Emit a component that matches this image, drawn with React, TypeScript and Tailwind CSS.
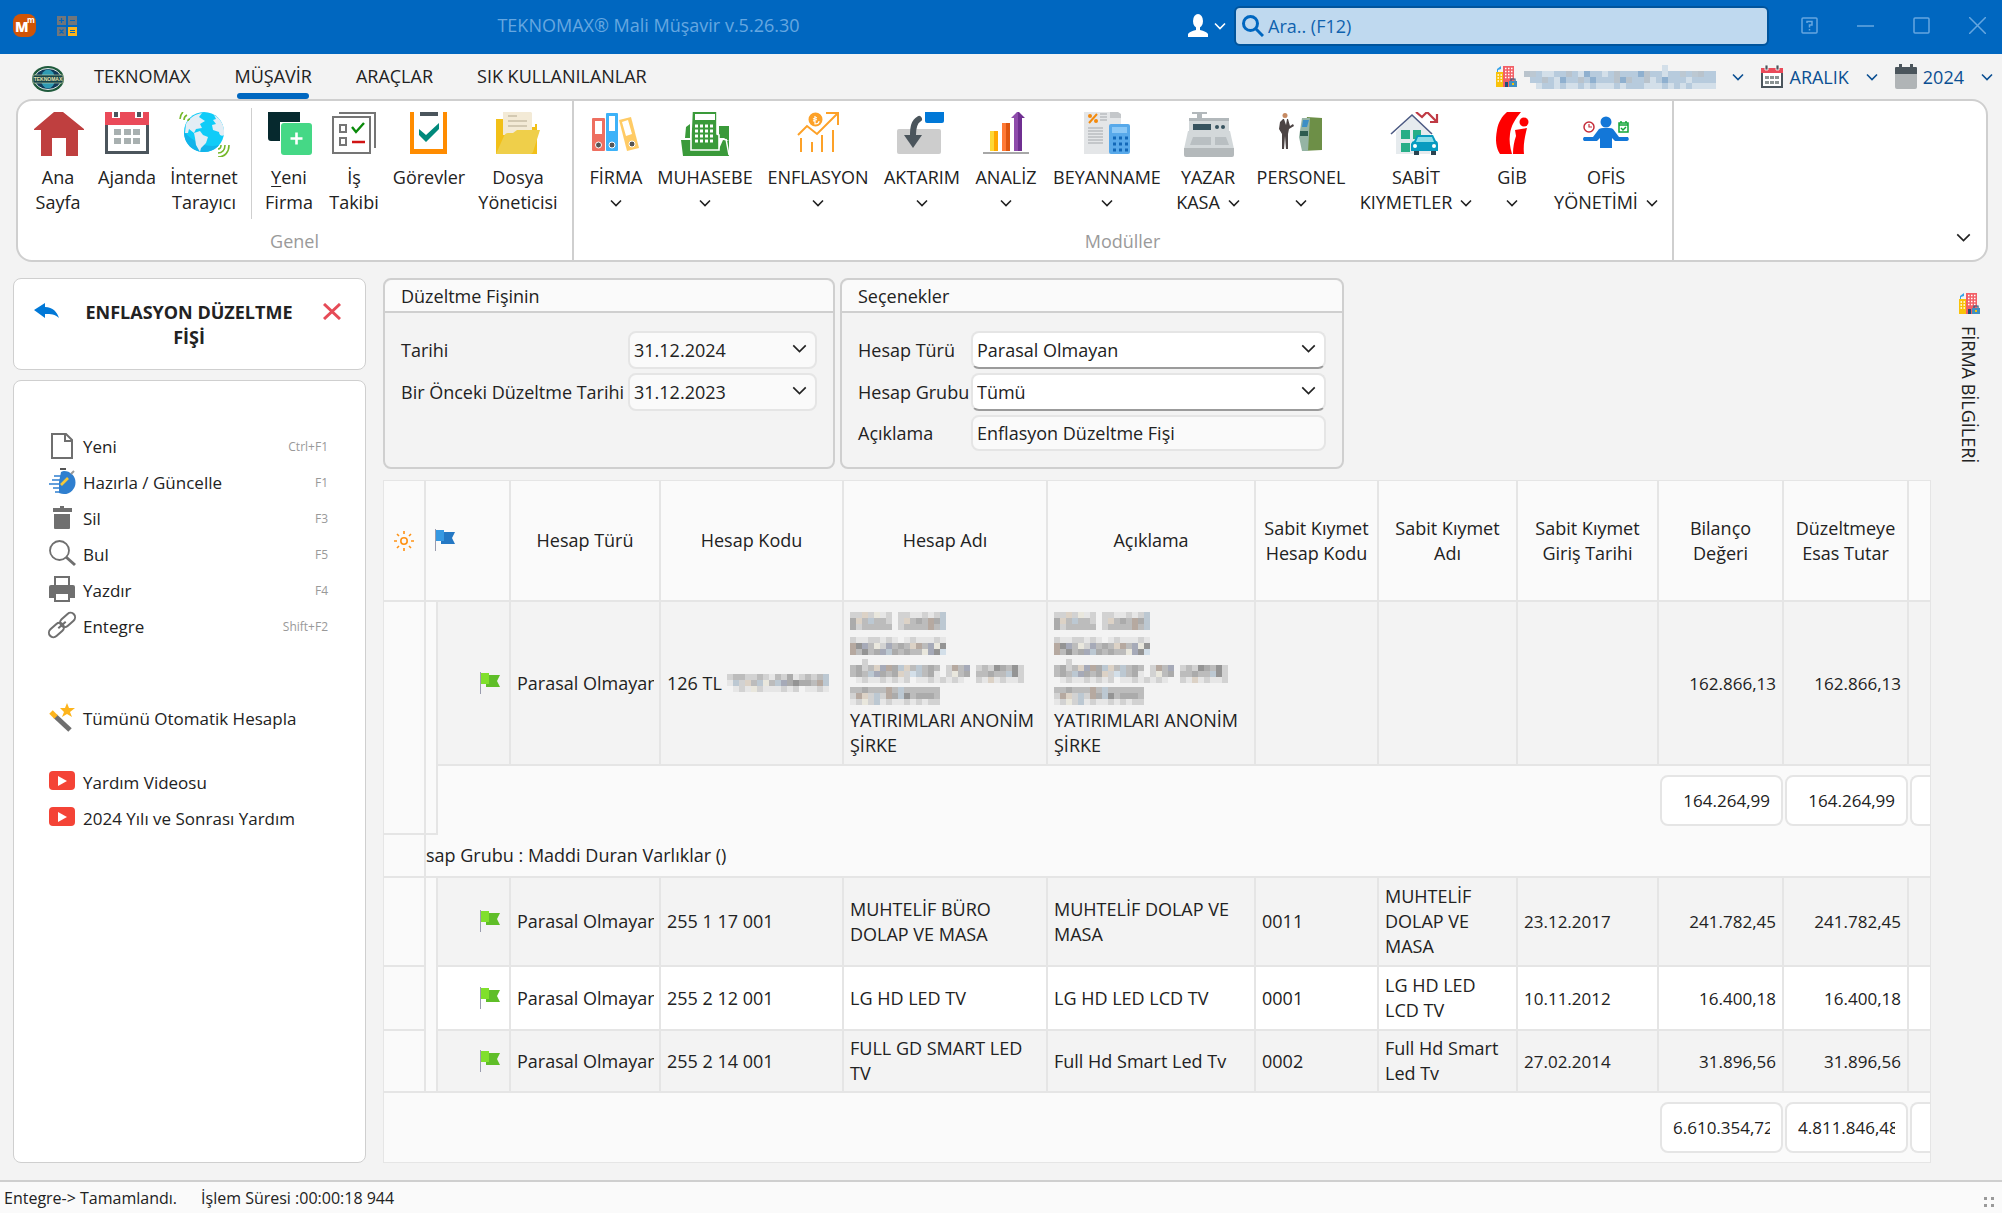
import { useState } from 'react';
import type { ReactNode } from 'react';

function Chevron({ className = '', size = 12 }: { className?: string; size?: number }) {
  return (
    <svg width={size} height={size} viewBox="0 0 12 12" fill="none" stroke="currentColor" strokeWidth={size > 12 ? 1.3 : 1.6} className={className}>
      <path d="M1 3.5 6 8.5 11 3.5" />
    </svg>
  );
}

/* ---------- ribbon icons, all on a 56x45 grid ---------- */

const icons: Record<string, ReactNode> = {
  home: (
    <path fill="#bf3f3f" d="M24 0h9l21 17v1h-6v26H36V26H22v18H11V18H4v-1z" />
  ),
  calendar: (
    <>
      <path fill="#4b555c" d="M6 0h44v42H6z" />
      <path fill="#fff" d="M9 13h38v26H9z" />
      <path fill="#ea4a59" d="M6 0h44v13H6z" />
      <path fill="#fff" d="M13 0h8v6h-8zM36 0h8v6h-8z" />
      <path fill="#4b555c" d="M15 0h4v5h-4zM38 0h4v5h-4z" />
      <path fill="#a8b0b0" d="M15 17h7v6h-7zM25 17h7v6h-7zM34 17h7v6h-7zM15 26h7v6h-7zM25 26h7v6h-7zM34 26h7v6h-7z" />
    </>
  ),
  globe: (
    <>
      <circle cx="28" cy="20" r="20" fill="#10ccf8" />
      <path fill="#12b4ea" d="M8 20c0 12 9 20 20 20 6 0 12-3 15-7-9 3-22 0-35-13z" />
      <path fill="#e3edf5" d="M10 12c4-7 10-10 16-11l-3 4 6 4-5 3 2 4-6 1-2 4-5-4-1 4-3 0z" />
      <path fill="#e3edf5" d="M18 21l6-2 3 4 5 2-2 6-5 5-1 4-4-7-1-7z" />
      <path fill="#e3edf5" d="M38 3c7 4 11 11 10 20-2 2-5 0-5-3l-6-2-1-5 4-1-3-4 3-1z" />
      <path fill="none" stroke="#76b82a" strokeWidth="1.6" d="M4 7c0-3 1-5 3-7M8 8c0-2 1-4 3-5M12 9c0-1 1-2 2-2M42 37c2 0 3-2 3-4M42 41c4 0 7-3 7-8M42 45c7 0 11-5 11-12" />
    </>
  ),
  addFirm: (
    <>
      <path fill="#06292e" d="M7 0h32v10H19v19H10a3 3 0 0 1-3-3z" />
      <rect x="20" y="11" width="31" height="32" rx="3" fill="#45d886" />
      <path stroke="#fff" strokeWidth="2.6" d="M35.500 20.500v12M29.500 26.500h12" />
    </>
  ),
  tasks: (
    <>
      <path fill="none" stroke="#757575" strokeWidth="2" d="M13 1h36v35" />
      <rect x="7" y="5" width="37" height="36" fill="#fff" stroke="#757575" strokeWidth="2" />
      <path fill="none" stroke="#757575" strokeWidth="2" d="M14 13h6v7h-6zM14 26h6v7h-6z" />
      <path fill="none" stroke="#0a8a0a" strokeWidth="2.4" d="m26 15 4 5 8-9" />
      <path stroke="#d01414" strokeWidth="2.600" d="M26 30h13" />
    </>
  ),
  clipboard: (
    <>
      <path fill="#ff8c00" d="M9 0h37v42H9z" />
      <path fill="#fff" d="M13 0h29v37H13z" />
      <path fill="#4b555c" d="M19 0h18v4H19z" />
      <path fill="#00897b" d="m18 17 7 6 13-12v6L25 30l-7-7z" />
    </>
  ),
  folder: (
    <>
      <path fill="#f2c018" d="M6 7h7v8h32v-3h2v30H6z" />
      <path fill="#f3ead6" d="M13 0h28l1 1v22H13z" />
      <path stroke="#c9bfa6" strokeWidth="1.400" d="M18 4h9M18 9h19M18 14h19" />
      <path fill="#efcf4a" d="M6 42 14 24c1-2 2-3 4-3h5l4-3h23l-7 22q-1 2-3 2z" />
    </>
  ),
  binders: (
    <>
      <rect x="4" y="6" width="13" height="33" rx="1" fill="#ee6f60" />
      <rect x="18" y="1" width="12" height="38" rx="1" fill="#3db2f8" />
      <path fill="#ffcb65" d="m31 8 12-3 8 31-12 3z" />
      <path fill="#fff" d="M7 9h7v13H7zM21 4h6v15h-6zM34 10l6-2 4 14-6 2z" />
      <circle cx="10.500" cy="33" r="3" fill="#555" stroke="#fff" />
      <circle cx="24" cy="33" r="3" fill="#555" stroke="#fff" />
      <circle cx="44" cy="32" r="3" fill="#555" stroke="#fff" />
    </>
  ),
  accounting: (
    <>
      <path fill="#3a9a3a" d="M4 28h10l3 9h25l4-9V28l6 1v15H6zM9 15l4-3v14H8zM42 14h10v15l-5-3h-5z" />
      <path fill="#3a9a3a" stroke="#fff" strokeWidth="1.600" d="M15 -1h25v23l2 1v15H14V22z" />
      <path fill="#fff" d="M18 2h20v6H18z" />
      <path stroke="#fff" strokeWidth="3" strokeDasharray="3 2" d="M18 14h20M18 19h20M18 24h20M18 29h20" />
      <path stroke="#fff" strokeWidth="1.400" d="m49 27 3 16" />
    </>
  ),
  inflation: (
    <g fill="none" stroke="#fda128" strokeWidth="2">
      <path d="m8 23 9-9 10 8L47 2M36 1h12v12M11 26v14M22 30v10M32 23v17M43 18v22" />
      <circle cx="25.500" cy="7.500" r="6" fill="#fda128" />
      <path stroke="#fff" strokeWidth="1.200" d="M25 4v8c2 0 4-1 4-3M23 7l4-1.500M23 9l4-1.500" />
    </g>
  ),
  transfer: (
    <>
      <rect x="3" y="17" width="44" height="25" rx="2" fill="#cdcdcd" />
      <path fill="#0078d7" d="M31 0h19v9q0 2-2 2H33q-2 0-2-2z" />
      <path fill="none" stroke="#4b555c" strokeWidth="6" strokeLinecap="round" d="M25 7c-5 3-6 8-6 16" />
      <path fill="#4b555c" d="M10 23h18l-9 13z" />
    </>
  ),
  analysis: (
    <>
      <path fill="#fdd835" d="M12 19h4v20h-4z" />
      <path fill="#ffa800" d="M16 19h4v20h-4z" />
      <path fill="#ff7a36" d="M24 11h4v28h-4z" />
      <path fill="#dd5510" d="M28 11h4v28h-4z" />
      <path fill="#8e4cab" d="M33 6 39 0h1v39h-4V6z" />
      <path fill="#6f2f91" d="M40 0h1l6 6h-3v33h-4z" />
      <path stroke="#8a8a8a" strokeWidth="1.600" d="M5 41h46" />
    </>
  ),
  declaration: (
    <>
      <path fill="#e4e6e8" d="M5 0h26l11 6v36H5z" />
      <path fill="#c4c7ca" d="M31 0v6h11V2l-3-2z" />
      <path stroke="#f48a0c" strokeWidth="2" d="m10 11 8-9" />
      <circle cx="11" cy="4" r="2" fill="#f48a0c" />
      <circle cx="17" cy="9" r="2" fill="#f48a0c" />
      <path stroke="#b9bdc0" strokeWidth="1.400" d="M21 2h7M21 5h7M21 8h7M9 16h15M9 19h15M9 22h15M9 25h15M9 28h15M9 31h15" />
      <rect x="30" y="12" width="21" height="30" rx="2" fill="#58a9ea" />
      <path fill="#8cc8f6" d="M33 15h15v6H33z" />
      <path stroke="#1268b8" strokeWidth="3" strokeDasharray="3 3" d="M34 26h15M34 32h15M34 38h15" />
    </>
  ),
  register: (
    <>
      <path fill="#b2b8bb" d="M12 0h15v2h-5v4h-5V2h-5z" />
      <path fill="#d3d8da" d="M9 6h40v13H9z" />
      <path fill="#b2b8bb" d="M9 6h40v3H9z" />
      <path fill="#37535f" d="M13 12h18v6H13z" />
      <circle cx="37" cy="15" r="2" fill="#37535f" />
      <circle cx="43" cy="15" r="2" fill="#37535f" />
      <path fill="#d3d8da" d="M8 19h42l4 18H4z" />
      <path fill="#b9bfc2" d="M13 25h18v8H10zM35 25h11l3 8H35z" />
      <path fill="#b4b9bb" d="M4 36h50v7q0 2-2 2H6q-2 0-2-2z" />
    </>
  ),
  personnel: (
    <>
      <circle cx="12" cy="3.500" r="2.500" fill="#c68a62" />
      <path fill="#4c4444" d="M10 7h5l2 7 3-2 1 2-5 3-1 5v15h-2l-1-13-1 13H9V22l-3-5 1-7z" />
      <path fill="#fff" d="M11 7h3l-1 6z" />
      <path fill="#6d8f47" d="m34 5 15 1v32l-20 1V26z" />
      <path fill="#95b4a4" d="m29 6 8 0-2 33h-6l-3-14z" />
      <path fill="#3d8fc6" d="m30 8 6 0-2 7h-5z" />
      <path fill="#2d5c50" d="M27 19h8v5h-8z" />
    </>
  ),
  assets: (
    <>
      <path fill="#e6ebee" d="M8 20 24 3l18 18v21H8z" />
      <path fill="none" stroke="#4d5b84" strokeWidth="1.600" d="M3 22 24 3l20 19" />
      <path fill="#27ae87" d="M13 18h9v9h-9zM25 18h8v9h-8zM13 31h9v9h-9z" />
      <path fill="none" stroke="#bf3a44" strokeWidth="2.200" d="m28 0 6 5 5-5 10 10M42 10h7V2" />
      <path fill="#2b4350" d="M26 38h5v5h-5zM43 38h5v5h-5z" />
      <path fill="#079bc0" d="M23 32q1-3 3-3l3-6h16l3 6q2 0 2 4v6H23z" />
      <path fill="#8ddde8" d="m30 25 14 0 2 5H28z" />
      <circle cx="27" cy="34" r="2" fill="#fff" />
      <circle cx="46" cy="34" r="2" fill="#fff" />
    </>
  ),
  gib: (
    <>
      <path fill="#fe0000" d="M23 0h14c-6 7-10 14-11 22-1 7 0 13 2 20H16C12 36 11 28 13 18 14 11 18 4 23 0z" />
      <path fill="#fe0000" d="m31 18 12-2c-2 8-4 17-3 26H29c0-7 1-12 3-18z" />
      <circle cx="40" cy="10" r="4.500" fill="#fe0000" />
    </>
  ),
  office: (
    <>
      <circle cx="28" cy="10" r="5.500" fill="#1377d8" />
      <path fill="#1377d8" d="M6 25h9l6-8q2-1 4-1h6q3 0 4 1l6 8h9q2 3-1 4H37l-3-3v10H22V26l-3 3H6q-2-2 0-4z" />
      <circle cx="11" cy="15" r="5" fill="none" stroke="#c62f3c" strokeWidth="1.500" />
      <path fill="none" stroke="#c62f3c" strokeWidth="1.200" d="M11 12v3h3" />
      <path fill="none" stroke="#12a537" strokeWidth="1.500" d="M41 11h9v9h-9zM41 13h9M43 9v2M48 9v2M43 16l2 2 3-3" />
    </>
  ),
};

interface RibbonItem {
  icon: string;
  width: string;
  lines: string[];
  menu?: boolean;
  accessKey?: boolean;
}

const generalLeft: RibbonItem[] = [
  { icon: 'home', width: 'w-[68px]', lines: ['Ana', 'Sayfa'] },
  { icon: 'calendar', width: 'w-[70px]', lines: ['Ajanda'] },
  { icon: 'globe', width: 'w-[84px]', lines: ['İnternet', 'Tarayıcı'] },
];

const generalRight: RibbonItem[] = [
  { icon: 'addFirm', width: 'w-[64px]', lines: ['Yeni', 'Firma'], accessKey: true },
  { icon: 'tasks', width: 'w-[66px]', lines: ['İş', 'Takibi'] },
  { icon: 'clipboard', width: 'w-[84px]', lines: ['Görevler'] },
  { icon: 'folder', width: 'w-[94px]', lines: ['Dosya', 'Yöneticisi'] },
];

const modules: RibbonItem[] = [
  { icon: 'binders', width: 'w-[70px]', lines: ['FİRMA'], menu: true },
  { icon: 'accounting', width: 'w-[108px]', lines: ['MUHASEBE'], menu: true },
  { icon: 'inflation', width: 'w-[118px]', lines: ['ENFLASYON'], menu: true },
  { icon: 'transfer', width: 'w-[90px]', lines: ['AKTARIM'], menu: true },
  { icon: 'analysis', width: 'w-[78px]', lines: ['ANALİZ'], menu: true },
  { icon: 'declaration', width: 'w-[124px]', lines: ['BEYANNAME'], menu: true },
  { icon: 'register', width: 'w-[78px]', lines: ['YAZAR', 'KASA'], menu: true },
  { icon: 'personnel', width: 'w-[108px]', lines: ['PERSONEL'], menu: true },
  { icon: 'assets', width: 'w-[122px]', lines: ['SABİT', 'KIYMETLER'], menu: true },
  { icon: 'gib', width: 'w-[70px]', lines: ['GİB'], menu: true },
  { icon: 'office', width: 'w-[118px]', lines: ['OFİS', 'YÖNETİMİ'], menu: true },
];

function RibbonButton({ item }: { item: RibbonItem }) {
  const [first, second] = item.lines;
  return (
    <button type="button" className={`flex shrink-0 flex-col items-center whitespace-nowrap ${item.width}`}>
      <svg width="56" height="45" viewBox="0 0 56 45">{icons[item.icon]}</svg>
      <span className="mt-2 leading-[25px]">
        {item.accessKey ? <><u className="underline-offset-2">{first[0]}</u>{first.slice(1)}</> : first}
      </span>
      <span className="flex h-[25px] items-center gap-2 leading-[25px]">
        {second}
        {item.menu && <Chevron />}
      </span>
    </button>
  );
}

function RibbonGroup({ title, children }: { title: string; children: ReactNode }) {
  return (
    <div className="flex flex-col border-r-2 border-[#cfcfcf] pt-[11px] pr-[7px] pl-[6px]">
      <div className="flex">{children}</div>
      <div className="mt-[14px] text-center leading-[25px] text-[#9a9a9a]">{title}</div>
    </div>
  );
}

/* ---------- small shared drawings ---------- */

function BuildingIcon() {
  return (
    <svg width="21" height="21" viewBox="0 0 21 21">
      <path fill="#f25f66" d="M7 0h11v21H7z" />
      <path stroke="#fff" strokeWidth="1.400" strokeDasharray="1.500 1.500" d="M9 2.500h8M9 5.500h8M9 8.500h8M9 11.500h8" />
      <path fill="#f9c20a" d="M0 6h7v15H0z" />
      <path stroke="#fff" strokeWidth="1.400" strokeDasharray="1.500 1.500" d="M1.500 9h5M1.500 12h5M1.500 15h5" />
      <path fill="#36a3e8" d="M1 3l4-3v3l-3 1v2H1z" />
      <path fill="#1f4e79" d="M9 16h3v5H9z" />
      <path fill="#3f8fc0" d="M13 15h8v6h-8z" />
      <path fill="none" stroke="#2a5d84" strokeWidth="1.200" d="M15 15v-2h4v2" />
      <path fill="#f9c20a" d="M16 17h2v2h-2z" />
    </svg>
  );
}

function Flag({ light, dark }: { light: string; dark: string }) {
  return (
    <svg width="22" height="23" viewBox="0 0 22 23">
      <path fill="#9a9cae" d="M1 0h1v22H1z" />
      <path fill={dark} d="M7 3h14l-3 6 3 6H7z" />
      <path fill={light} d="M2 1h8v11H2z" />
    </svg>
  );
}

const shades: Record<string, string> = {
  '1': '#e6e6e6',
  '2': '#d2d2d2',
  '3': '#bcbcbc',
  '4': '#ababab',
  '5': '#949494',
  b: '#bcc8d2',
  t: '#dcd2c6',
  s: '#a6aab8',
  k: '#b6a9a0',
  w: '#e9e7dd',
  x: '#d3dfe9',
  y: '#b7cbdd',
  z: '#8fb0cf',
  q: '#b9c3cc',
};

// Masked names are shown as rows of coarse cells
function Masked({ rows }: { rows: string[] }) {
  const cols = Math.max(...rows.map((r) => r.length));
  return (
    <svg width={cols * 6} height={rows.length * 6} shapeRendering="crispEdges" className="shrink-0">
      {rows.flatMap((row, y) =>
        row.split('').map((c, x) => (shades[c] ? <rect key={`${x}-${y}`} x={x * 6} y={y * 6} width="6" height="6" fill={shades[c]} /> : null))
      )}
    </svg>
  );
}

const maskedFirm = [
  '00000000000000000000000x00000000',
  'qbyxxyyqyxzyyxyqyyyzqyyxyybybqyy',
  '0yyqyxzyyqyzyyyqzqyyqxyzyyyxyyyy',
  '00xyyxyxxyxyxxxyxyyyxxxyxyxyxxxx',
];

const maskedName = [
  ['22t2w1202211212b', '4t3b33202t343k4b', '4233333023333k3b'],
  ['2112212101211121', 'k5s3w2s343tk3sw5', 'k3534sb43433ws5x'],
  ['00200000000000000000000000000', '3423tsk4bt3b34302k3s023254352', '343bs434t2xb34102w34033433b52', '01211212120112121210021t12112'],
  ['334333k3b333333', '2kt2b2k4b534443', '12w2b1211212122'],
];

function MaskedName() {
  return (
    <>
      {maskedName.map((rows, i) => (
        <span key={i} className="flex h-[25px] items-center">
          <Masked rows={rows} />
        </span>
      ))}
    </>
  );
}

/* ---------- title bar and tabs ---------- */

function TitleBar() {
  return (
    <header className="flex h-[54px] shrink-0 items-center bg-[#0067c0] pb-[3px] text-[#66a7e0]">
      <svg width="24" height="25" viewBox="0 0 24 25" className="ml-[12px]">
        <rect x="1" y="1" width="23" height="23" rx="8" fill="#d15405" />
        <text x="3" y="19" fontSize="14" fontWeight="800" fontFamily="Open Sans, sans-serif" fill="#fff">M</text>
        <text x="15" y="10" fontSize="8" fontWeight="700" fontFamily="Open Sans, sans-serif" fill="#fff">m</text>
      </svg>
      <svg width="20" height="20" viewBox="0 0 20 20" className="ml-[21px]">
        <path fill="#70767c" d="M0 0h9v9H0zM11 0h9v9h-9zM0 11h9v9H0z" />
        <path fill="#fdb41c" d="M11 11h9v9h-9z" />
        <path stroke="#0067c0" strokeWidth="1.200" d="M2 4.500h5M4.500 2v5M13 4.500h5M2.500 13.500l4 4M6.500 13.500l-4 4M13 14.500h5M13 16.500h5" />
      </svg>
      <h1 className="w-[1111px] pl-8 text-center leading-[25px]">TEKNOMAX® Mali Müşavir v.5.26.30</h1>
      <button type="button" aria-label="Kullanıcı" className="flex items-center gap-[6px] text-white">
        <svg width="20" height="24" viewBox="0 0 20 24" fill="currentColor">
          <ellipse cx="10" cy="7" rx="5" ry="7" />
          <path d="M8 12h4v4c4 1 7 2 8 4v3H0v-3c1-2 4-3 8-4z" />
        </svg>
        <Chevron />
      </button>
      <label className="ml-2 flex h-10 min-w-0 flex-1 items-center gap-1 rounded-md border-2 border-[#00549c] bg-[#bfd9ef] px-[6px]">
        <svg width="22" height="22" viewBox="0 0 22 22" fill="none" stroke="#0067c0" strokeWidth="3">
          <circle cx="8.500" cy="8.500" r="7" />
          <path d="m14 14 7 7" />
        </svg>
        <input aria-label="Ara" placeholder="Ara.. (F12)" className="min-w-0 flex-1 bg-transparent outline-none placeholder:text-[#0f62ae]" />
      </label>
      <div className="flex items-center gap-[39px] pr-[16px] pl-[32px]">
        <button type="button" aria-label="Yardım">
          <svg width="17" height="17" viewBox="0 0 17 17" fill="none" stroke="currentColor" strokeWidth="1.500">
            <rect x="1" y="1" width="15" height="15" rx="1" />
            <path d="M6 6V4.500h5V8H8.500v2.500M8.500 12v1.500" />
          </svg>
        </button>
        <button type="button" aria-label="Küçült">
          <svg width="17" height="17" stroke="currentColor" strokeWidth="1.500"><path d="M0 9h17" /></svg>
        </button>
        <button type="button" aria-label="Ekranı kapla">
          <svg width="17" height="17" fill="none" stroke="currentColor" strokeWidth="1.500"><rect x="1" y="1" width="15" height="15" rx="1" /></svg>
        </button>
        <button type="button" aria-label="Kapat">
          <svg width="17" height="17" stroke="currentColor" strokeWidth="1.500"><path d="m0 0 17 17M17 0 0 17" /></svg>
        </button>
      </div>
    </header>
  );
}

const tabs = ['TEKNOMAX', 'MÜŞAVİR', 'ARAÇLAR', 'SIK KULLANILANLAR'];

function TabBar({ active, onSelect }: { active: string; onSelect: (tab: string) => void }) {
  return (
    <div className="flex h-[45px] shrink-0 items-stretch">
      <svg width="32" height="26" viewBox="0 0 32 26" className="mt-[12px] ml-[32px] mr-2">
        <ellipse cx="16" cy="13" rx="16" ry="13" fill="#1f5a3c" />
        <ellipse cx="16" cy="13" rx="13.500" ry="10.500" fill="#123b5a" stroke="#dfe9e4" />
        <ellipse cx="16" cy="13" rx="7" ry="9.500" fill="#2f9bb4" />
        <path fill="#14434a" stroke="#cfd8a8" strokeWidth=".6" d="M1 9h30v8H1z" />
        <text x="16" y="15" textAnchor="middle" fontSize="5" fontWeight="700" fontFamily="Liberation Sans, sans-serif" fill="#e8e4b0">TEKNOMAX</text>
      </svg>
      <nav className="flex">
        {tabs.map((tab) => (
          <button key={tab} type="button" onClick={() => onSelect(tab)} className="flex flex-col items-center px-[22px] pt-[10px] leading-[25px]">
            {tab}
            {tab === active && <span className="mt-1 h-[6px] w-[72px] rounded-full bg-[#0067c0]" />}
          </button>
        ))}
      </nav>
      <div className="ml-auto flex items-center pr-[9px] text-[#0b4f92]">
        <button type="button" aria-label="Firma seç" className="flex items-center">
          <BuildingIcon />
          <span className="mr-4 ml-[7px]"><Masked rows={maskedFirm} /></span>
          <Chevron />
        </button>
        <button type="button" className="ml-4 flex items-center">
          <svg width="24" height="24" viewBox="0 0 24 24" className="mr-[6px]">
            <path fill="#4b555c" d="M1 3h22v20H1z" />
            <path fill="#fff" d="M3 8h18v13H3z" />
            <path fill="#ea4a59" d="M1 3h22v5H1z" />
            <path fill="#4b555c" stroke="#fff" strokeWidth=".8" d="M5 0h3v5H5zM16 0h3v5h-3z" />
            <path fill="#8b9393" d="M5 11h4v3H5zM10 11h4v3h-4zM15 11h4v3h-4zM5 16h4v3H5zM10 16h4v3h-4zM15 16h4v3h-4z" />
          </svg>
          ARALIK
          <Chevron className="ml-[17px]" />
        </button>
        <button type="button" className="ml-4 flex items-center">
          <svg width="24" height="25" viewBox="0 0 24 25" className="mr-[5px]">
            <path fill="#b0b4b6" d="M1 9h22v14q0 2-2 2H3q-2 0-2-2z" />
            <path fill="#4b555c" d="M1 4q0-1 1-1h3V0h3v3h8V0h3v3h3q1 0 1 1v6H1z" />
          </svg>
          2024
          <Chevron className="ml-[17px]" />
        </button>
      </div>
    </div>
  );
}

function Ribbon() {
  return (
    <section className="mr-[14px] ml-4 flex h-[163px] shrink-0 overflow-hidden rounded-2xl border-2 border-[#cfcfcf] bg-white">
      <RibbonGroup title="Genel">
        {generalLeft.map((item) => <RibbonButton key={item.icon} item={item} />)}
        <span className="mx-[5px] -my-[4px] h-[111px] w-px bg-[#cfcfcf]" />
        {generalRight.map((item) => <RibbonButton key={item.icon} item={item} />)}
      </RibbonGroup>
      <RibbonGroup title="Modüller">
        <span className="w-px" />
        {modules.map((item) => <RibbonButton key={item.icon} item={item} />)}
      </RibbonGroup>
      <button type="button" aria-label="Şeridi daralt" className="mt-auto mr-[15px] mb-[15px] ml-auto">
        <Chevron size={15} />
      </button>
    </section>
  );
}

/* ---------- left menu ---------- */

const gray = '#6f6f6f';

const menuIcons: Record<string, ReactNode> = {
  new: <path fill="none" stroke={gray} strokeWidth="2" d="M3 0h14l6 6v18H3zM16 0v7h7" />,
  refresh: (
    <>
      <path fill="#2f7fcf" d="M12 2q2-1 3-1a11.500 11.500 0 0 1 0 23q-2 0-5-1V12z" />
      <path stroke="#2f7fcf" strokeWidth="1.400" d="M5 6h8M3 10h9M0 14h11M4 18h8M6 22h6" />
      <path stroke="#555" strokeWidth="2" d="M11-1h6" />
      <path stroke="#999" strokeWidth="2" d="m22 4 3-3" />
      <path stroke="#f6c83a" strokeWidth="2.600" d="m12 15 7-7" />
    </>
  ),
  trash: <path fill={gray} d="M4 2h7V0h4v2h8v4H4zM5 8h16v14q0 1-1 1H6q-1 0-1-1z" />,
  find: (
    <g fill="none" stroke={gray}>
      <circle cx="10.500" cy="8.500" r="9.500" strokeWidth="1.800" />
      <path strokeWidth="3" d="m17 15 9 8" />
    </g>
  ),
  print: (
    <>
      <path fill={gray} d="M2 7h22q2 0 2 2v11H0V9q0-2 2-2z" />
      <path fill="#fff" stroke={gray} strokeWidth="2" d="M6-1h14v10H6zM6 15h14v8H6z" />
      <path fill={gray} d="M5 7h16v5H5z" />
    </>
  ),
  link: (
    <g fill="none" stroke={gray} strokeWidth="2" transform="rotate(-42 13 11)">
      <rect x="-3" y="6.500" width="17" height="9" rx="4.500" />
      <rect x="12" y="6.500" width="17" height="9" rx="4.500" />
      <path d="M8 11h10" />
    </g>
  ),
  wand: (
    <>
      <path stroke="#6f6f6f" strokeWidth="5" d="m6 10 15 14" />
      <path stroke="#fdb41c" strokeWidth="5" d="m2 6 5 5" />
      <path fill="#fdb41c" d="m18-3 2 5 6 0-5 4 2 5-5-3-5 3 2-5-4-4h5z" />
    </>
  ),
  video: (
    <>
      <rect x="0" y="1" width="26" height="19" rx="4" fill="#f44336" />
      <path fill="#fff" d="m9 6 9 5-9 5z" />
    </>
  ),
};

function MenuRow({ icon, label, shortcut }: { icon: string; label: string; shortcut?: string }) {
  return (
    <button type="button" className="flex h-9 w-full items-center text-left text-[17px]">
      <svg width="26" height="27" viewBox="0 0 26 27" overflow="visible">{menuIcons[icon]}</svg>
      <span className="ml-2">{label}</span>
      {shortcut && <span className="ml-auto text-xs text-[#999]">{shortcut}</span>}
    </button>
  );
}

function Sidebar() {
  return (
    <aside className="flex w-[353px] shrink-0 flex-col gap-[10px]">
      <div className="flex h-[92px] items-start rounded-lg border border-[#cfcfcf] bg-white pt-[21px] pr-6 pl-[20px]">
        <button type="button" aria-label="Geri" className="mt-[3px]">
          <svg width="25" height="16" viewBox="0 0 25 16"><path fill="#0078d7" d="M0 7 11 0v4c8 0 12 5 14 11-4-4-8-4-14-4v4z" /></svg>
        </button>
        <h2 className="flex-1 pr-7 pl-6 text-center leading-[25px] font-bold">ENFLASYON DÜZELTME FİŞİ</h2>
        <button type="button" aria-label="Kapat" className="mt-[3px]">
          <svg width="18" height="17" viewBox="0 0 18 17" stroke="#e64b57" strokeWidth="3"><path d="m1 1 16 15M17 1 1 16" /></svg>
        </button>
      </div>
      <nav className="flex-1 rounded-lg border border-[#cfcfcf] bg-white pt-12 pr-[37px] pl-[35px]">
        <MenuRow icon="new" label="Yeni" shortcut="Ctrl+F1" />
        <MenuRow icon="refresh" label="Hazırla / Güncelle" shortcut="F1" />
        <MenuRow icon="trash" label="Sil" shortcut="F3" />
        <MenuRow icon="find" label="Bul" shortcut="F5" />
        <MenuRow icon="print" label="Yazdır" shortcut="F4" />
        <MenuRow icon="link" label="Entegre" shortcut="Shift+F2" />
        <div className="mt-14 mb-7">
          <MenuRow icon="wand" label="Tümünü Otomatik Hesapla" />
        </div>
        <MenuRow icon="video" label="Yardım Videosu" />
        <MenuRow icon="video" label="2024 Yılı ve Sonrası Yardım" />
      </nav>
    </aside>
  );
}

/* ---------- forms ---------- */

function Panel({ title, width, children }: { title: string; width: string; children: ReactNode }) {
  return (
    <fieldset className={`h-[191px] overflow-hidden rounded-lg border-2 border-[#cfcfcf] ${width}`}>
      <div className="h-[33px] border-b-2 border-[#cfcfcf] bg-[#fafafa] px-4 leading-[32px]">{title}</div>
      <div className="flex flex-col gap-1 px-4 pt-[18px]">{children}</div>
    </fieldset>
  );
}

function SelectField({ id, label, options, size, muted }: { id: string; label: string; options: string[]; size: string; muted?: boolean }) {
  return (
    <div className="flex h-[38px] items-center justify-between whitespace-nowrap">
      <label htmlFor={id}>{label}</label>
      <div className={`relative h-[38px] shrink-0 ${size}`}>
        <select
          id={id}
          className={`h-full w-full appearance-none rounded-lg border-2 border-[#e5e5e5] px-1 outline-none ${muted ? 'bg-[#fafafa]' : 'border-b-[#9b9b9b] bg-white'}`}
        >
          {options.map((o) => <option key={o}>{o}</option>)}
        </select>
        <Chevron size={15} className="pointer-events-none absolute top-[10px] right-[10px]" />
      </div>
    </div>
  );
}

/* ---------- table ---------- */

interface Entry {
  type: string;
  code: ReactNode;
  name: ReactNode;
  description: ReactNode;
  assetCode: string;
  assetName: string;
  entryDate: string;
  balance: string;
  base: string;
  height: string;
  background: string;
}

const maskedEntry: Entry = {
  type: 'Parasal Olmayan',
  code: (
    <span className="flex items-center gap-[5px] whitespace-nowrap">
      126 TL <Masked rows={['2332232132412323b', '1b2t3bw3bs45443kb', '0121w211121201121']} />
    </span>
  ),
  name: <><MaskedName />YATIRIMLARI ANONİM ŞİRKE</>,
  description: <><MaskedName />YATIRIMLARI ANONİM ŞİRKE</>,
  assetCode: '',
  assetName: '',
  entryDate: '',
  balance: '162.866,13',
  base: '162.866,13',
  height: 'h-[164px]',
  background: 'bg-[#f3f3f3]',
};

const entries: Entry[] = [
  {
    type: 'Parasal Olmayan', code: '255 1 17 001', name: 'MUHTELİF BÜRO DOLAP VE MASA', description: 'MUHTELİF DOLAP VE MASA',
    assetCode: '0011', assetName: 'MUHTELİF DOLAP VE MASA', entryDate: '23.12.2017', balance: '241.782,45', base: '241.782,45',
    height: 'h-[89px]', background: 'bg-[#f3f3f3]',
  },
  {
    type: 'Parasal Olmayan', code: '255 2 12 001', name: 'LG HD LED TV', description: 'LG HD LED LCD TV',
    assetCode: '0001', assetName: 'LG HD LED LCD TV', entryDate: '10.11.2012', balance: '16.400,18', base: '16.400,18',
    height: 'h-[64px]', background: 'bg-white',
  },
  {
    type: 'Parasal Olmayan', code: '255 2 14 001', name: 'FULL GD SMART LED TV', description: 'Full Hd Smart Led Tv',
    assetCode: '0002', assetName: 'Full Hd Smart Led Tv', entryDate: '27.02.2014', balance: '31.896,56', base: '31.896,56',
    height: 'h-[62px]', background: 'bg-[#f3f3f3]',
  },
];

const line = 'border-[#e5e5e5]';

function Cell({ children, className = 'pr-1' }: { children?: ReactNode; className?: string }) {
  return <td className={`overflow-hidden border-r-2 border-b-2 ${line} pl-[6px] ${className}`}>{children}</td>;
}

function EntryRow({ entry, gutter, last }: { entry: Entry; gutter?: number; last?: boolean }) {
  return (
    <tr className={`${entry.height} ${entry.background}`}>
      <td rowSpan={gutter} className={`border-r-2 border-b-2 ${line} bg-[#fafafa]`} />
      <td className={`border-r-2 ${last ? 'border-b-2' : ''} ${line} bg-[#fafafa]`} />
      <Cell><span className="flex justify-end pr-[4px]"><Flag light="#80e02c" dark="#5fbe28" /></span></Cell>
      <Cell><span className="block w-[137px] overflow-hidden whitespace-nowrap">{entry.type}</span></Cell>
      <Cell>{entry.code}</Cell>
      <Cell>{entry.name}</Cell>
      <Cell>{entry.description}</Cell>
      <Cell>{entry.assetCode}</Cell>
      <Cell>{entry.assetName}</Cell>
      <Cell className="pr-1 text-[17px]">{entry.entryDate}</Cell>
      <Cell className="pr-[6px] text-right text-[17px]">{entry.balance}</Cell>
      <Cell className="pr-[6px] text-right text-[17px]">{entry.base}</Cell>
      <td className={`border-b-2 ${line}`} />
    </tr>
  );
}

function Total({ value }: { value: string }) {
  return (
    <td className="p-0 px-px text-[17px]">
      <div className={`flex h-[51px] items-center rounded-lg border-2 ${line} bg-white px-[11px]`}>
        <span className="ml-auto max-w-[97px] overflow-hidden">{value}</span>
      </div>
    </td>
  );
}

function TotalEdge() {
  return (
    <td className="overflow-hidden p-0 pl-px">
      <div className={`h-[51px] rounded-l-lg border-2 border-r-0 ${line} bg-white`} />
    </td>
  );
}

const headings = ['Hesap Türü', 'Hesap Kodu', 'Hesap Adı', 'Açıklama', 'Sabit Kıymet Hesap Kodu', 'Sabit Kıymet Adı', 'Sabit Kıymet Giriş Tarihi', 'Bilanço Değeri', 'Düzeltmeye Esas Tutar'];

function EntryTable() {
  return (
    <div className={`flex-1 overflow-hidden border ${line} bg-[#fafafa]`}>
      <table className="w-full table-fixed border-separate border-spacing-0 text-left leading-[25px]">
        <colgroup>
          <col className="w-[42px]" />
          <col className="w-[12px]" />
          <col className="w-[73px]" />
          <col className="w-[150px]" />
          <col className="w-[183px]" />
          <col className="w-[204px]" />
          <col className="w-[208px]" />
          <col className="w-[123px]" />
          <col className="w-[139px]" />
          <col className="w-[141px]" />
          <col className="w-[125px]" />
          <col className="w-[125px]" />
          <col />
        </colgroup>
        <thead>
          <tr className="h-[121px]">
            <th className={`border-r-2 border-b-2 ${line} p-0`}>
              <svg width="20" height="20" viewBox="0 0 20 20" fill="none" stroke="#ff9214" strokeWidth="1.600" className="mx-auto">
                <circle cx="10" cy="10" r="3.200" />
                <path d="M10 0v3M10 17v3M0 10h3M17 10h3M3 3l2 2M15 15l2 2M17 3l-2 2M5 15l-2 2" />
              </svg>
            </th>
            <th colSpan={2} className={`border-r-2 border-b-2 ${line} pl-2`}><Flag light="#3699e2" dark="#2478c4" /></th>
            {headings.map((h) => (
              <th key={h} className={`border-r-2 border-b-2 ${line} px-1 text-center font-normal`}>{h}</th>
            ))}
            <th className={`border-b-2 ${line}`} />
          </tr>
        </thead>
        <tbody>
          <EntryRow entry={maskedEntry} gutter={2} />
          <tr className="h-[69px]">
            <td className={`border-r-2 border-b-2 ${line}`} />
            <td colSpan={8} />
            <Total value="164.264,99" />
            <Total value="164.264,99" />
            <TotalEdge />
          </tr>
          <tr className="h-[43px]">
            <td className={`border-r-2 border-b-2 ${line}`} />
            <td colSpan={12} className={`border-b-2 ${line} p-0`}>sap Grubu : Maddi Duran Varlıklar ()</td>
          </tr>
          {entries.map((entry, i) => <EntryRow key={String(entry.code)} entry={entry} last={i === entries.length - 1} />)}
        </tbody>
        <tfoot>
          <tr className="h-[69px]">
            <td colSpan={10} />
            <Total value="6.610.354,72" />
            <Total value="4.811.846,48" />
            <TotalEdge />
          </tr>
        </tfoot>
      </table>
    </div>
  );
}

export default function App() {
  const [activeTab, setActiveTab] = useState('MÜŞAVİR');

  return (
    <div className="flex min-h-screen flex-col bg-[#f3f3f3] font-['Open_Sans','Noto_Sans',sans-serif] text-lg text-[#222]">
      <TitleBar />
      <TabBar active={activeTab} onSelect={setActiveTab} />
      <Ribbon />

      <div className="flex flex-1 pt-4 pb-[17px] pl-[13px]">
        <Sidebar />
        <main className="ml-[17px] flex min-w-0 flex-1 flex-col gap-[11px]">
          <div className="flex gap-[5px]">
            <Panel title="Düzeltme Fişinin" width="w-[452px]">
              <SelectField id="date" label="Tarihi" options={['31.12.2024']} size="w-[189px]" muted />
              <SelectField id="previous-date" label="Bir Önceki Düzeltme Tarihi" options={['31.12.2023']} size="w-[189px]" muted />
            </Panel>
            <Panel title="Seçenekler" width="w-[504px]">
              <SelectField id="account-type" label="Hesap Türü" options={['Parasal Olmayan', 'Parasal']} size="w-[355px]" />
              <SelectField id="account-group" label="Hesap Grubu" options={['Tümü']} size="w-[355px]" />
              <div className="flex h-9 items-center justify-between">
                <label htmlFor="description">Açıklama</label>
                <input
                  id="description"
                  defaultValue="Enflasyon Düzeltme Fişi"
                  className="h-9 w-[355px] rounded-lg border-2 border-[#e5e5e5] bg-[#fafafa] px-1 outline-none"
                />
              </div>
            </Panel>
          </div>
          <EntryTable />
        </main>
        <button type="button" className="flex w-[71px] flex-col items-center gap-3 pt-[15px] pl-[5px]">
          <BuildingIcon />
          <span className="leading-[20px] [writing-mode:vertical-rl]">FİRMA BİLGİLERİ</span>
        </button>
      </div>

      <footer className="flex h-[34px] shrink-0 items-center border-t-2 border-[#cfcfcf] bg-[#fafafa] px-1 text-base">
        <span>Entegre-&gt; Tamamlandı.</span>
        <span className="ml-6">İşlem Süresi :00:00:18 944</span>
        <svg width="10" height="10" className="mt-2 mr-1 ml-auto" fill="#9a9a9a">
          <path d="M0 0h3v3H0zM7 0h3v3H7zM0 7h3v3H0zM7 7h3v3H7z" />
        </svg>
      </footer>
    </div>
  );
}
